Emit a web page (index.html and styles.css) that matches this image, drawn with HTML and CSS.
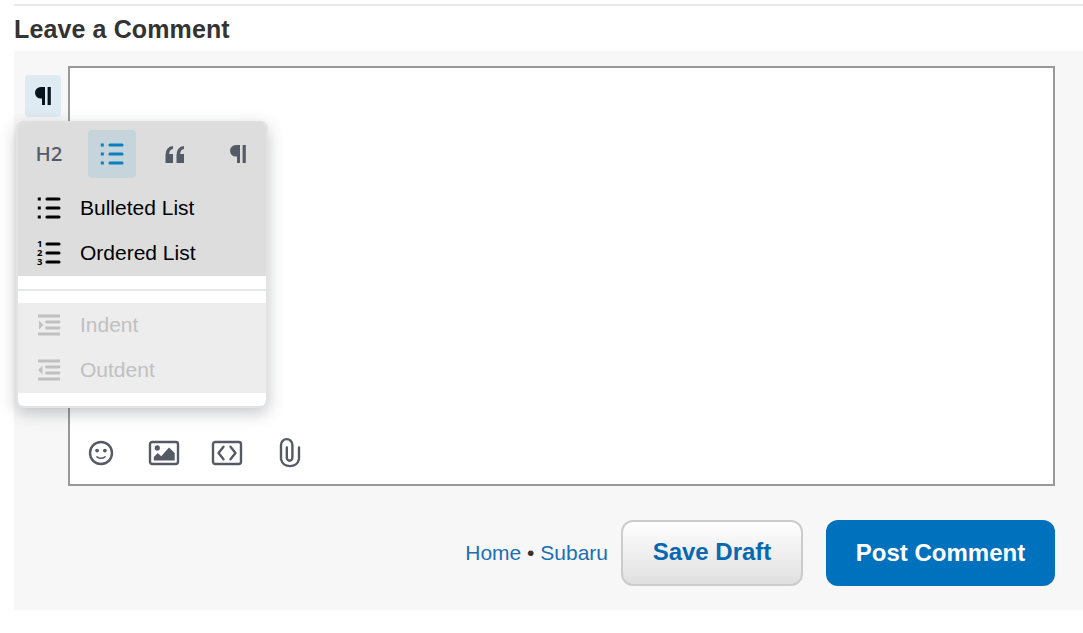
FILE: index.html
```html
<!DOCTYPE html>
<html lang="en">
<head>
<meta charset="utf-8">
<title>Leave a Comment</title>
<link rel="stylesheet" href="styles.css">
</head>
<body>
<svg class="sprite" aria-hidden="true">
  <symbol id="pilcrow" viewBox="0 0 24 24"><path d="M9.8 3H14V21H11V14.6H9.8A5.8 5.8 0 0 1 9.8 3ZM16.6 3H19.8V21H16.6Z" fill="currentColor"/></symbol>
  <symbol id="bullets" viewBox="0 0 24 24"><path d="M10 3H22M10 12H22M10 21H22" stroke="currentColor" stroke-width="3.1" stroke-linecap="round"/><path d="M.8 1.5h3v3H.8ZM.8 10.5h3v3H.8ZM.8 19.5h3v3H.8Z" fill="currentColor"/></symbol>
</svg>
<main class="comment">
  <h1 class="title">Leave a Comment</h1>
  <section class="panel">
    <div class="composer">
      <button class="format"><svg class="icon-mark"><use href="#pilcrow"/></svg></button>
      <div class="editor">
        <div class="attachments">
          <svg viewBox="0 0 32 32"><circle cx="16" cy="16" r="11" /><circle class="solid" cx="12.1" cy="13.6" r="1.9"/><circle class="solid" cx="19.9" cy="13.6" r="1.9"/><path class="thin" d="M12 19.8Q16 22.8 20 19.8"/></svg>
          <svg viewBox="0 0 32 32"><rect x="2" y="5" width="28" height="22" rx="2.2"/><circle class="solid" cx="9.3" cy="10.9" r="2.6"/><path class="solid" d="M5.8 23.5V20L9.8 16L13.2 19.2L21 10.5L26.7 16V23.5Z"/></svg>
          <svg viewBox="0 0 32 32"><rect x="2" y="5" width="28" height="22" rx="2.2"/><path d="M12.5 9.8L7.5 16L12.5 22.2M19.5 9.8L24.5 16L19.5 22.2"/></svg>
          <svg viewBox="0 0 32 32"><path d="M25 10.5V22.3A9.2 8.6 0 0 1 7 22.3V8A5.6 5.8 0 0 1 18.4 8V20.5A2.8 3.2 0 0 1 12.8 20.5V10.5"/></svg>
        </div>
      </div>
      <div class="menu">
        <div class="active-group">
          <div class="styles">
            <button class="style heading">H2</button>
            <button class="style selected"><svg class="icon-list"><use href="#bullets"/></svg></button>
            <button class="style"><svg class="icon-quote" viewBox="0 0 20 17"><path d="M8 0V3Q4.3 3.5 4.2 8H8V17H.5V9Q.5.8 8 0ZM19 0V3Q15.3 3.5 15.2 8H19V17H11.5V9Q11.5.8 19 0Z" fill="currentColor"/></svg></button>
            <button class="style"><svg class="icon-mark"><use href="#pilcrow"/></svg></button>
          </div>
          <div class="item"><svg class="icon-list"><use href="#bullets"/></svg><span>Bulleted List</span></div>
          <div class="item"><svg class="icon-list" viewBox="0 0 24 24"><path d="M10 3H22M10 12H22M10 21H22" stroke="currentColor" stroke-width="3.1" stroke-linecap="round"/><g class="digits"><text x="0" y="6">1</text><text x="0" y="15.2">2</text><text x="0" y="24.2">3</text></g></svg><span>Ordered List</span></div>
        </div>
        <hr class="divider">
        <div class="disabled-group">
          <div class="item"><svg class="icon-list" viewBox="0 0 24 24"><path d="M1 3H23M1 21H23" stroke="currentColor" stroke-width="3"/><path d="M9.5 9H22M9.5 15H22" stroke="currentColor" stroke-width="2.8" stroke-linecap="round"/><path d="M2 7.5V16.5L6.5 12Z" fill="currentColor"/></svg><span>Indent</span></div>
          <div class="item"><svg class="icon-list" viewBox="0 0 24 24"><path d="M1 3H23M1 21H23" stroke="currentColor" stroke-width="3"/><path d="M9.5 9H22M9.5 15H22" stroke="currentColor" stroke-width="2.8" stroke-linecap="round"/><path d="M5.5 7.5V16.5L1.2 12Z" fill="currentColor"/></svg><span>Outdent</span></div>
        </div>
      </div>
    </div>
    <footer class="actions">
      <nav class="crumbs"><a>Home</a> • <a>Subaru</a></nav>
      <button class="btn draft">Save Draft</button>
      <button class="btn post">Post Comment</button>
    </footer>
  </section>
</main>
</body>
</html>
```
FILE: styles.css
```css
* { box-sizing: border-box; }
body { margin: 0; background: #fff; color: #333; font-family: "Liberation Sans", Arial, sans-serif; }
button { border: 0; padding: 0; background: none; font: inherit; color: inherit; }
svg { display: block; fill: none; overflow: visible; }
.sprite { position: absolute; width: 0; height: 0; }
.comment { margin: 4px 0 0 14px; border-top: 2px solid #e9e9e9; }
.title { height: 45px; margin: 0; font-size: 25px; line-height: 46px; letter-spacing: .12px; }
.panel { height: 559px; background: #f7f7f7; padding: 15px 28px 0 11px; }
.composer { position: relative; display: flex; align-items: flex-start; gap: 7px; }
.format { display: flex; align-items: center; justify-content: center; width: 36px; height: 42px; margin-top: 9px; border-radius: 4px; background: #deebf3; color: #07141d; }
.icon-mark { width: 24px; height: 24px; }
.editor { flex: 1; display: flex; align-items: flex-end; height: 420px; border: 2px solid #999; background: #fff; }
.attachments { display: flex; gap: 31px; padding: 0 0 15px 15px; color: #555a65; }
.attachments svg { width: 32px; height: 32px; stroke: currentColor; stroke-width: 2.4; stroke-linecap: round; stroke-linejoin: round; }
.attachments .solid { fill: currentColor; stroke: none; }
.attachments .thin { stroke-width: 1.6; }
.menu { position: absolute; left: -9px; top: 55px; width: 252px; height: 287px; border: 2px solid #e2e3e4; border-top-color: #dfdfdf; border-radius: 8px; background: #fff; box-shadow: 0 5px 16px rgba(50,55,65,.28); overflow: hidden; }
.active-group { height: 153px; background: #ddd; color: #000; }
.styles { display: flex; gap: 15px; padding: 7px 0 7px 7px; color: #555b66; }
.style { display: flex; align-items: center; justify-content: center; flex: none; width: 48px; height: 48px; border-radius: 4px; }
.heading { padding-bottom: 2px; font: 500 20.5px "Noto Sans", sans-serif; }
.selected { background: #c6d5dc; color: #087fbe; }
.icon-list { width: 24px; height: 24px; flex: none; }
.icon-quote { width: 20px; height: 17px; }
.item { display: flex; align-items: center; gap: 19px; height: 45px; padding-left: 19px; font-size: 21px; }
.digits { fill: currentColor; font: 700 9.5px "Open Sans", sans-serif; }
.divider { height: 2px; margin: 13px 0 12px; border: 0; background: #e5e6e6; }
.disabled-group { background: #ededed; color: #c0c0c0; }
.disabled-group .item { padding-bottom: 2px; }
.actions { display: flex; align-items: center; justify-content: flex-end; height: 66px; margin-top: 34px; }
.crumbs { margin-right: 13px; font-size: 21px; }
.crumbs a { color: #1b6fb3; }
.btn { height: 66px; border-radius: 12px; font-size: 24px; font-weight: 700; }
.draft { width: 182px; margin-right: 23px; padding-bottom: 2px; border: 2px solid #ccc; background: linear-gradient(#fff, #e0e0e0); color: #0768b1; }
.post { width: 229px; background: #0072bd; color: #fff; }
```
